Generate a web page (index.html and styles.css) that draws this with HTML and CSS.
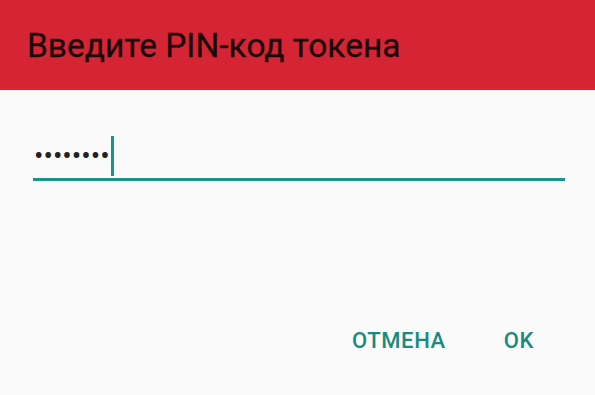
FILE: index.html
```html
<!DOCTYPE html>
<html>
<head>
<meta charset="utf-8">
<link rel="stylesheet" href="styles.css">
</head>
<body>
<div class="dialog">
  <div class="header"><h1 class="title">Введите PIN-код токена</h1></div>
  <div class="content">
    <div class="field">
      <span class="dots">••••••••</span><span class="cursor"></span>
    </div>
  </div>
  <div class="actions">
    <span class="btn">ОТМЕНА</span>
    <span class="btn">OK</span>
  </div>
</div>
</body>
</html>
```
FILE: styles.css
```css
html, body { margin: 0; padding: 0; }
body { width: 595px; height: 395px; overflow: hidden; background: #fafafa; font-family: Roboto, "Noto Sans", sans-serif; }
.dialog { display: flex; flex-direction: column; height: 395px; }
.header { background: #d52535; height: 90px; display: flex; align-items: center; padding: 0 0 0 27px; box-sizing: border-box; }
.title { margin: 0; font-size: 33.5px; font-weight: 400; color: #1a0a0a; -webkit-text-stroke: 0.3px #1a0a0a; }
.content { padding: 44px 30px 0 33px; }
.field { height: 44px; border-bottom: 3px solid #199488; display: flex; align-items: center; }
.dots { font-size: 28px; color: #222; letter-spacing: 0; margin-left: 1px; line-height: 1; }
.cursor { display: inline-block; width: 3px; height: 40px; background: #199488; margin-left: 1px; }
.actions { display: flex; justify-content: flex-end; gap: 58px; padding: 0 61px 0 0; margin-top: auto; margin-bottom: 42px; }
.btn { font-size: 22px; font-weight: 500; color: #1a8a80; letter-spacing: 0.6px; }
```
